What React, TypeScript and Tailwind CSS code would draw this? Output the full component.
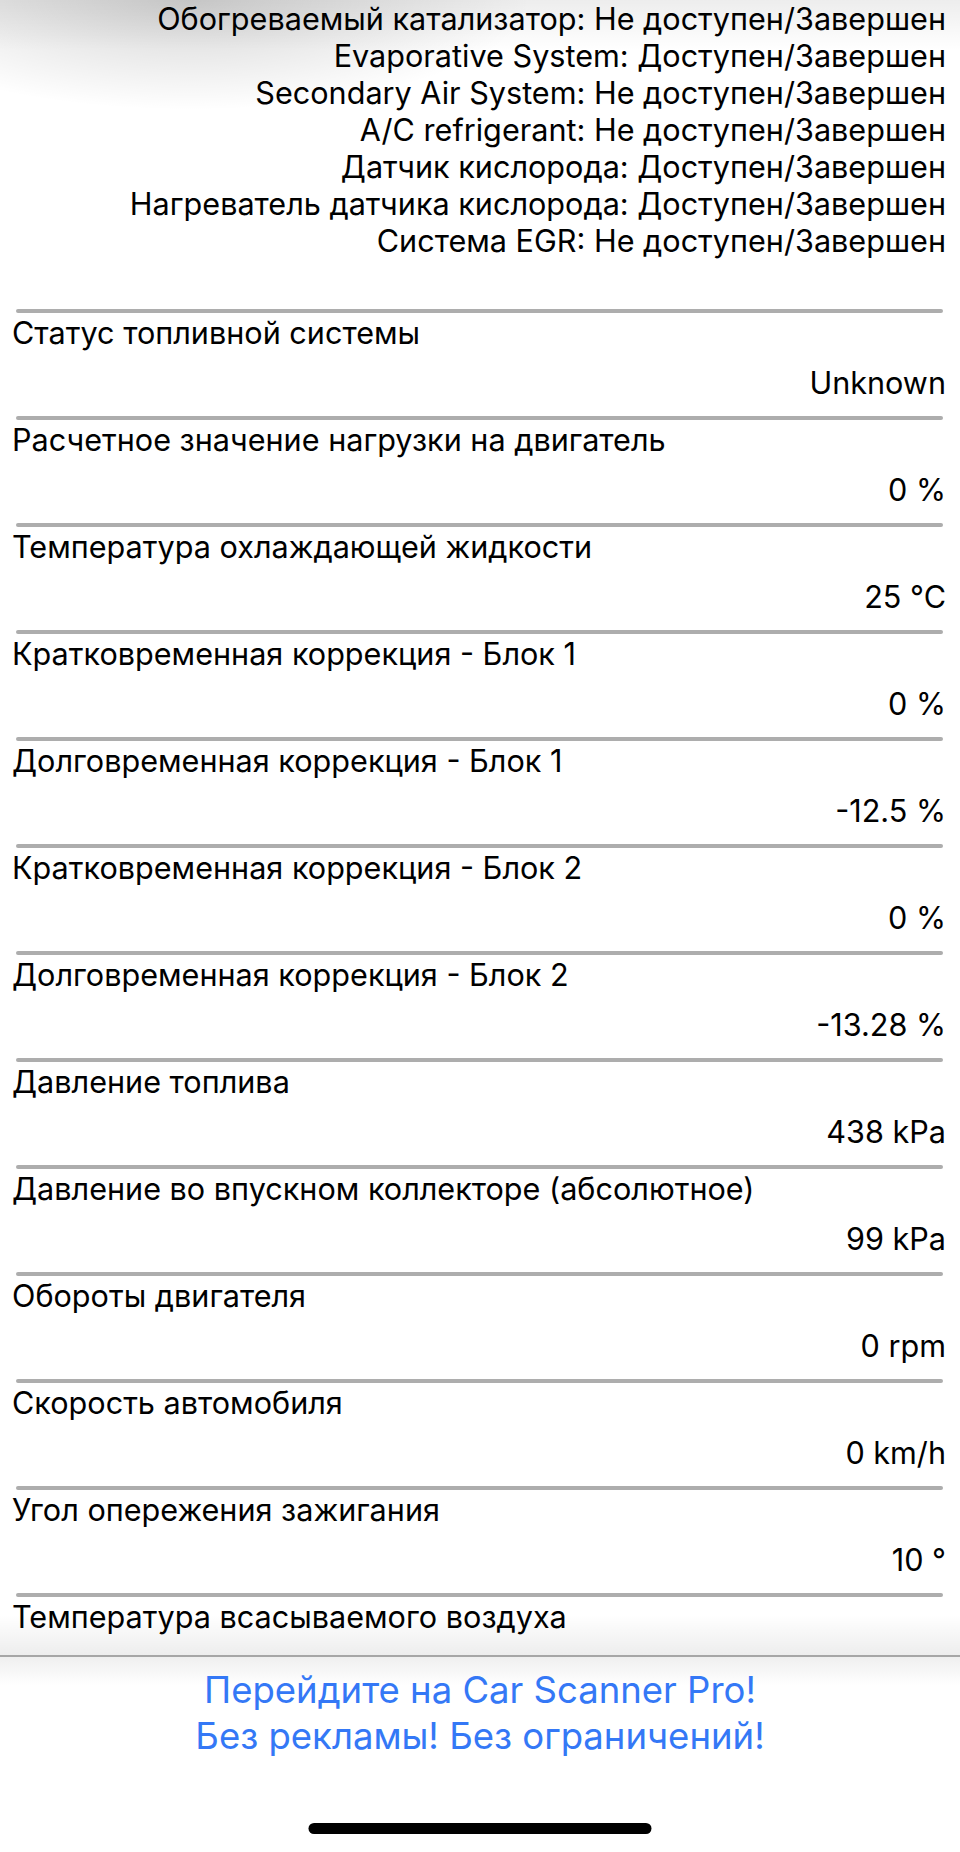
import React from "react";

const topLines = [
  "Обогреваемый катализатор: Не доступен/Завершен",
  "Evaporative System: Доступен/Завершен",
  "Secondary Air System: Не доступен/Завершен",
  "A/C refrigerant: Не доступен/Завершен",
  "Датчик кислорода: Доступен/Завершен",
  "Нагреватель датчика кислорода: Доступен/Завершен",
  "Система EGR: Не доступен/Завершен",
];

const rows: [string, string][] = [
  ["Статус топливной системы", "Unknown"],
  ["Расчетное значение нагрузки на двигатель", "0 %"],
  ["Температура охлаждающей жидкости", "25 °C"],
  ["Кратковременная коррекция - Блок 1", "0 %"],
  ["Долговременная коррекция - Блок 1", "-12.5 %"],
  ["Кратковременная коррекция - Блок 2", "0 %"],
  ["Долговременная коррекция - Блок 2", "-13.28 %"],
  ["Давление топлива", "438 kPa"],
  ["Давление во впускном коллекторе (абсолютное)", "99 kPa"],
  ["Обороты двигателя", "0 rpm"],
  ["Скорость автомобиля", "0 km/h"],
  ["Угол опережения зажигания", "10 °"],
  ["Температура всасываемого воздуха", ""],
];

export default function App() {
  return (
    <div
      className="relative flex h-[1852px] w-[960px] flex-col overflow-hidden bg-white text-black"
      style={{ fontFamily: "Inter, 'Noto Sans', sans-serif" }}
    >
      <div className="relative flex-1 overflow-hidden">
        <div className="pr-[14px] text-right text-[30.6px] leading-[37px]">
          {topLines.map((t) => (
            <div key={t}>{t}</div>
          ))}
        </div>
        <div className="mt-[50px]">
          {rows.map(([label, value]) => (
            <div key={label}>
              <div className="ml-[16px] mr-[17px] h-[4px] rounded-full bg-[#adadad]" />
              <div className="pl-[12px] pr-[14px] pt-[2px] pb-[15px] text-[30.6px]">
                <div className="leading-[36px]">{label}</div>
                <div className="mt-[14px] h-[36px] text-right leading-[36px]">{value}</div>
              </div>
            </div>
          ))}
        </div>
        <div className="pointer-events-none absolute left-0 right-0 top-0 h-[120px] bg-[radial-gradient(ellipse_340px_110px_at_190px_0px,rgba(0,0,0,0.17),rgba(0,0,0,0))]" />
        <div className="pointer-events-none absolute left-0 right-0 top-0 h-[50px] bg-[linear-gradient(to_bottom,rgba(0,0,0,0.07),rgba(0,0,0,0))]" />
        <div className="pointer-events-none absolute bottom-0 left-0 right-0 h-[40px] bg-[linear-gradient(to_bottom,rgba(0,0,0,0),rgba(0,0,0,0.07))]" />
      </div>
      <div className="relative h-[197px] shrink-0 border-t-2 border-[#a6a6a6] bg-[linear-gradient(to_bottom,#efefef,#ffffff_28px)]">
        <div className="pt-[10px] text-center text-[36.5px] leading-[46px] text-[#3478f6]">
          <div>Перейдите на Car Scanner Pro!</div>
          <div>Без рекламы! Без ограничений!</div>
        </div>
        <div className="absolute bottom-[18px] left-1/2 h-[11px] w-[343px] -translate-x-1/2 rounded-full bg-black" />
      </div>
    </div>
  );
}
